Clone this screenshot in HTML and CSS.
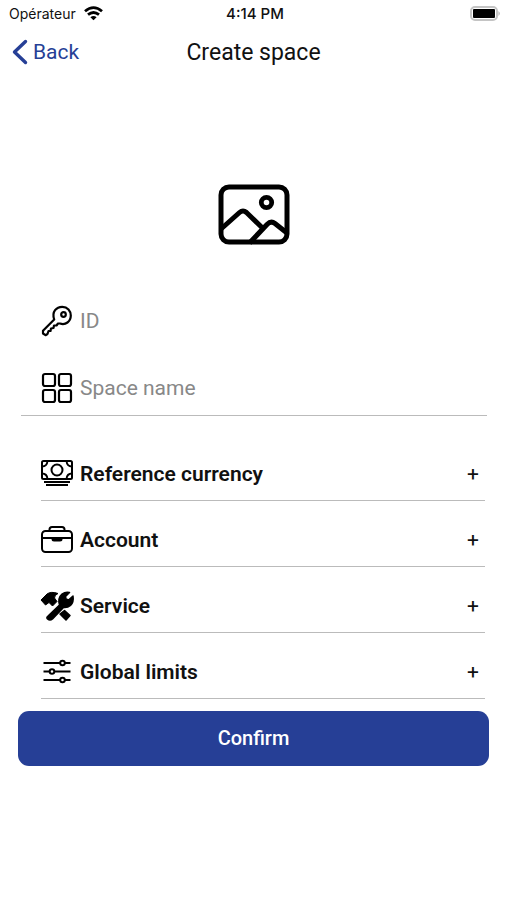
FILE: index.html
```html
<!DOCTYPE html>
<html lang="en">
<head>
<meta charset="utf-8">
<meta name="viewport" content="width=device-width, initial-scale=1">
<title>Create space</title>
<link rel="stylesheet" href="styles.css">
</head>
<body>
<div class="status">
  <div class="carrier"><span>Opérateur</span>
    <svg width="19" height="15" viewBox="0 0 19 15" fill="none" stroke="#000" stroke-width="2.8" aria-hidden="true"><path d="M1 5.200Q9.500-2 18 5.200M4 8.700Q9.500 4.200 15 8.700"/><path d="M6.400 11.300Q9.500 8.600 12.600 11.300L9.500 14.300Z" fill="#000" stroke="none"/></svg>
  </div>
  <time>4:14 PM</time>
  <svg class="battery" width="31" height="15" viewBox="0 0 31 15" aria-hidden="true"><rect x="1" y="1" width="26" height="13" rx="4" fill="#fff" stroke="#c4c4c4" stroke-width="2"/><rect x="3" y="3" width="22" height="9" rx="1" fill="#000"/><path d="M28.500 5Q31 7.500 28.500 10Z" fill="#aaa"/></svg>
</div>
<header class="nav">
  <a class="back" href="#"><svg width="16" height="26" viewBox="0 0 16 26" fill="none" stroke="#263f96" stroke-width="3.4" stroke-linecap="round" stroke-linejoin="round" aria-hidden="true"><path d="M13.500 2.500L2.500 13L13.500 23.500"/></svg>Back</a>
  <h1>Create space</h1>
</header>
<main>
  <button class="picture" type="button" aria-label="Choose picture">
    <svg width="72" height="62" viewBox="0 0 72 62" fill="none" stroke="#000" stroke-width="5" aria-hidden="true"><rect x="3" y="3" width="66" height="55" rx="8"/><circle cx="48.500" cy="18.500" r="5.200" stroke-width="4.800"/><path d="M3 45L21.500 28.500Q25 25.500 28.500 28.500L44.500 44M31.500 59L49 40.500Q53 36.500 57 39.500L69 49"/></svg>
  </button>
  <form>
    <div class="field plain">
      <label for="id" aria-label="ID"><svg width="32" height="32" viewBox="0 0 32 32" fill="none" stroke="#000" stroke-width="2.2" stroke-linejoin="round" aria-hidden="true"><path d="M13.200 14.500C10.500 6.500 15.500 1.800 21.300 1.800C26.500 1.800 29.800 5.800 29.800 10.500C29.800 16.500 24.500 20.500 19 18.500L17 18.500L15.500 20.500L13 20.500L12.500 23L10 23.500L9.500 26L7.500 26L6.500 29L4.500 30.200L2 28.500L2 25.800Z"/><circle cx="22.500" cy="9.500" r="2.300"/></svg></label>
      <input id="id" type="text" placeholder="ID">
    </div>
    <div class="field">
      <label for="name" aria-label="Space name"><svg width="32" height="32" viewBox="0 0 32 32" fill="none" stroke="#000" stroke-width="2.2" aria-hidden="true"><rect x="2" y="2" width="12" height="12" rx="2"/><rect x="18" y="2" width="12" height="12" rx="2"/><rect x="2" y="18" width="12" height="12" rx="2"/><rect x="18" y="18" width="12" height="12" rx="2"/></svg></label>
      <input id="name" type="text" placeholder="Space name">
    </div>
    <div class="sections">
      <button class="row" type="button"><svg width="32" height="32" viewBox="0 0 32 32" fill="none" stroke="#000" stroke-width="2" aria-hidden="true"><rect x="1" y="3" width="30" height="18" rx="1.500"/><circle cx="16" cy="12" r="5.500"/><path d="M1 8.500Q6 8.500 6.500 3M31 8.500Q26 8.500 25.500 3M1 15.500Q6 15.500 6.500 21M31 15.500Q26 15.500 25.500 21M3 24H29M5 27H27" stroke-width="1.900"/></svg><span>Reference currency</span><b>+</b></button>
      <button class="row" type="button"><svg width="32" height="32" viewBox="0 0 32 32" fill="none" stroke="#000" stroke-width="2" aria-hidden="true"><rect x="1" y="7" width="30" height="21" rx="3.500"/><path d="M8.500 7V5.500Q8.500 3 11 3H21Q23.500 3 23.500 5.500V7M1 14H31"/><path d="M10.500 14H21.500V15Q21.500 17.500 19 17.500H13Q10.500 17.500 10.500 15Z" fill="#000" stroke="none"/></svg><span>Account</span><b>+</b></button>
      <button class="row" type="button"><svg class="tools" width="32" height="32" viewBox="0 0 32 32" aria-hidden="true"><path d="M0 10L6 4Q10 1 17 3.500Q13.500 5 13.500 8L16 11.500L11.500 16L8 12.500L4.500 15Z" stroke="#000" stroke-linejoin="round"/><path d="M7 26L18.500 15Q16.500 8 21 4Q24.500 1.500 28.500 2.500L24.500 6.500L25 9L27.500 10L32 6Q33 12 29.500 15.500Q26.500 18 22.500 17.500L11.500 29Q9 31 6.500 29Q5 27.500 7 26Z" stroke="#000" stroke-width="1.500" stroke-linejoin="round"/><path d="M19 24L23.500 20.500L29 25.500L25 30Z" stroke="#000" stroke-width="1.500" stroke-linejoin="round"/></svg><span>Service</span><b>+</b></button>
      <button class="row" type="button"><svg width="32" height="32" viewBox="0 0 32 32" fill="#fff" stroke="#000" stroke-width="2" aria-hidden="true"><path d="M2.500 7H29.500M2.500 15.500H29.500M2.500 24H29.500"/><circle cx="21.500" cy="7" r="2.300"/><circle cx="11" cy="15.500" r="2.300"/><circle cx="21.500" cy="24" r="2.300"/></svg><span>Global limits</span><b>+</b></button>
    </div>
    <button class="confirm" type="submit">Confirm</button>
  </form>
</main>
</body>
</html>
```
FILE: styles.css
```css
* { box-sizing: border-box; }
body {
  margin: 0;
  background: #fff;
  color: #111;
  font-family: Roboto, "Liberation Sans", sans-serif;
}
svg { flex: none; display: block; }
.tools { overflow: visible; }
button, input { font: inherit; color: inherit; border: 0; background: none; padding: 0; }

.status {
  display: grid;
  grid-template-columns: 1fr auto 1fr;
  align-items: center;
  height: 28px;
  padding: 0 6px 0 9px;
  font: 14px/20px Inter, sans-serif;
}
.carrier { display: flex; align-items: center; gap: 8px; }
.carrier svg { margin-bottom: 2px; }
.status time { font-size: 15px; font-weight: 500; }
.battery { justify-self: end; margin-bottom: 2px; }

.nav {
  display: grid;
  grid-template-columns: 1fr auto 1fr;
  align-items: center;
  height: 48px;
  padding: 0 12px;
}
.back {
  display: flex;
  align-items: center;
  gap: 5px;
  color: #263f96;
  font-size: 21px;
  text-decoration: none;
}
h1 { margin: 0; font-size: 23px; font-weight: 400; }

.picture { display: block; margin: 108px auto 36px; }

.field {
  display: flex;
  align-items: center;
  gap: 7px;
  height: 67px;
  margin: 0 20px 0 21px;
  padding: 11px 0 0 20px;
  border-bottom: 1px solid #bbb;
}
.plain { border-color: transparent; }
.field input { flex: 1; min-width: 0; height: 40px; font-size: 21px; outline: 0; }
.field input::placeholder { color: #888; opacity: 1; }

.sections { margin: 19px 22px 0 41px; }
.row {
  display: flex;
  align-items: center;
  gap: 7px;
  width: 100%;
  height: 66px;
  padding: 13px 6px 0 0;
  border-bottom: 1px solid #bbb;
  font-size: 21px;
  font-weight: 600;
  text-align: left;
}
.row span { flex: 1; }
.row b { font-weight: 400; }

.confirm {
  display: block;
  width: calc(100% - 36px);
  height: 55px;
  margin: 12px auto 0;
  padding-bottom: 2px;
  border-radius: 11px;
  background: #263f96;
  color: #fff;
  font-size: 20px;
  font-weight: 500;
}
```
